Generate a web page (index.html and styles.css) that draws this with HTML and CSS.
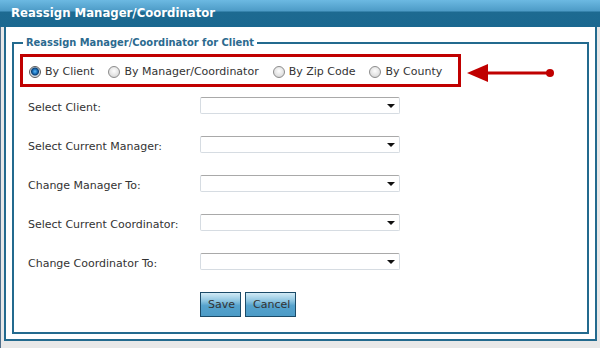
FILE: index.html
```html
<!DOCTYPE html>
<html lang="en">

<head>
    <meta charset="UTF-8">
    <meta name="viewport" content="width=device-width, initial-scale=1.0">
    <title>Reassign Manager/Coordinator</title>
    <link rel="stylesheet" href="styles.css">
</head>

<body>

<div class="header">Reassign Manager/Coordinator</div>

<div class="main">
    <div class="panel">
        <fieldset class="reassign">
            <legend>Reassign Manager/Coordinator for Client</legend>

            <div class="mode-group">
                <label class="mode"><input type="radio" name="mode" checked> By Client</label>
                <label class="mode"><input type="radio" name="mode"> By Manager/Coordinator</label>
                <label class="mode"><input type="radio" name="mode"> By Zip Code</label>
                <label class="mode"><input type="radio" name="mode"> By County</label>
            </div>

            <svg class="pointer" width="92" height="22" viewBox="0 0 92 22">
                <polygon points="0,10 21,1 21,19" fill="#c00000"/>
                <rect x="19" y="8.5" width="64" height="3" fill="#c00000"/>
                <circle cx="83" cy="10" r="4" fill="#c00000"/>
            </svg>

            <div class="form-grid">
                <span class="field-label">Select Client:</span>
                <span class="select-wrap"><select></select></span>

                <span class="field-label">Select Current Manager:</span>
                <span class="select-wrap"><select></select></span>

                <span class="field-label">Change Manager To:</span>
                <span class="select-wrap"><select></select></span>

                <span class="field-label">Select Current Coordinator:</span>
                <span class="select-wrap"><select></select></span>

                <span class="field-label">Change Coordinator To:</span>
                <span class="select-wrap"><select></select></span>
            </div>

            <div class="actions">
                <button class="save">Save</button>
                <button class="cancel">Cancel</button>
            </div>
        </fieldset>
    </div>
</div>

</body>
</html>
```

FILE: styles.css
```css
body {
    margin: 0;
    font-family: "DejaVu Sans", Verdana, sans-serif;
    font-size: 11px;
    color: #333;
    background-color: #e8e8e8;
}

.header {
    height: 27px;
    box-sizing: border-box;
    padding: 5px 0 0 11px;
    background: linear-gradient(to bottom, #6cb9e2 0, #4d9bc6 11px, #1d6a91 12px, #1b6890 27px);
    color: #fff;
    font-family: "DejaVu Sans Condensed", "DejaVu Sans", sans-serif;
    font-weight: bold;
    font-size: 13px;
}

.main {
    border-left: 1px solid #50708c;
    padding: 0 3px 7px 3px;
}

.panel {
    background-color: #fff;
    border: 2px solid #236a8e;
    border-top: none;
    padding: 9px 6px 5px 6px;
}

.reassign {
    position: relative;
    margin: 0;
    border: 2px solid #236a8e;
    padding: 0 6px 15px 6px;
}

.reassign legend {
    margin-left: 3px;
    padding: 0 3px;
    color: #2c6a8f;
    font-family: "DejaVu Sans Condensed", "DejaVu Sans", sans-serif;
    font-weight: bold;
    font-size: 11px;
}

.mode-group {
    display: flex;
    align-items: center;
    width: 441px;
    height: 33px;
    box-sizing: border-box;
    margin-top: 5px;
    padding: 2px 0 0 6px;
    border: 3px solid #c00000;
}

.mode {
    display: flex;
    align-items: center;
    gap: 4px;
    margin-right: 14px;
}

.mode input {
    appearance: none;
    width: 12px;
    height: 12px;
    margin: 0;
    border: 1px solid #8c8c8c;
    border-radius: 50%;
    background: radial-gradient(circle at 50% 40%, #fdfdfd 0, #e2e2e2 60%, #c8c8c8 100%);
}

.mode input:checked {
    border-color: #5a5a5a;
    background: radial-gradient(circle at 50% 45%, #5fb8f2 0, #1f78c4 2px, #0b3f73 3.5px, #cfd8e0 4.5px, #f2f2f2 100%);
}

.pointer {
    position: absolute;
    left: 453px;
    top: 14px;
}

.form-grid {
    display: grid;
    grid-template-columns: 172px 200px;
    row-gap: 22px;
    align-items: center;
    margin-top: 10px;
    padding-left: 8px;
}

.field-label {
    height: 17px;
    line-height: 21px;
}

.select-wrap {
    position: relative;
    display: block;
    height: 17px;
}

.select-wrap select {
    appearance: none;
    display: block;
    width: 200px;
    height: 17px;
    margin: 0;
    border: 1px solid #d6dce2;
    border-top-color: #a9a9a9;
    border-radius: 2px;
    background-color: #fff;
}

.select-wrap::after {
    content: "";
    position: absolute;
    right: 5px;
    top: 7px;
    border-left: 4px solid transparent;
    border-right: 4px solid transparent;
    border-top: 4px solid #111;
}

.actions {
    display: flex;
    gap: 4px;
    margin-top: 22px;
    padding-left: 180px;
}

.actions button {
    height: 25px;
    padding: 0 7px;
    border: 1px solid #1b4b68;
    background: linear-gradient(to bottom, #d2ebf6 0, #8cc4e0 35%, #55a2cc 55%, #4c9bc7 100%);
    color: #333;
    font-family: "DejaVu Sans", Verdana, sans-serif;
    font-size: 11px;
}

.actions .save {
    width: 41px;
}

.actions .cancel {
    width: 51px;
}
```
